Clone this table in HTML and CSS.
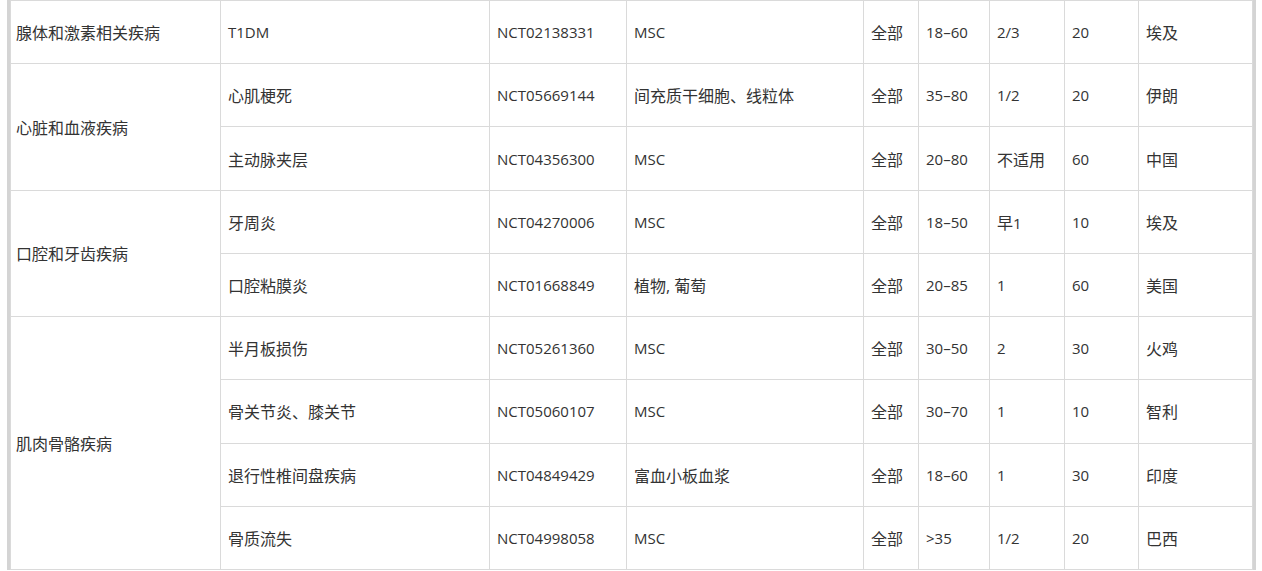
FILE: index.html
```html
<!DOCTYPE html>
<html lang="zh-CN">
<head>
<meta charset="utf-8">
<title>临床试验</title>
<link rel="stylesheet" href="styles.css">
</head>
<body>
<div class="frame">
<table class="trials">
<colgroup>
<col class="c1"><col class="c2"><col class="c3"><col class="c4"><col class="c5"><col class="c6"><col class="c7"><col class="c8"><col class="c9">
</colgroup>
<tbody>
<tr><td class="grp">腺体和激素相关疾病</td><td class="lat">T1DM</td><td class="lat">NCT02138331</td><td class="lat">MSC</td><td>全部</td><td class="lat">18–60</td><td class="lat">2/3</td><td class="lat">20</td><td>埃及</td></tr>
<tr><td class="grp" rowspan="2">心脏和血液疾病</td><td>心肌梗死</td><td class="lat">NCT05669144</td><td>间充质干细胞、线粒体</td><td>全部</td><td class="lat">35–80</td><td class="lat">1/2</td><td class="lat">20</td><td>伊朗</td></tr>
<tr><td>主动脉夹层</td><td class="lat">NCT04356300</td><td class="lat">MSC</td><td>全部</td><td class="lat">20–80</td><td>不适用</td><td class="lat">60</td><td>中国</td></tr>
<tr><td class="grp" rowspan="2">口腔和牙齿疾病</td><td>牙周炎</td><td class="lat">NCT04270006</td><td class="lat">MSC</td><td>全部</td><td class="lat">18–50</td><td>早<span class="lat">1</span></td><td class="lat">10</td><td>埃及</td></tr>
<tr><td>口腔粘膜炎</td><td class="lat">NCT01668849</td><td>植物, 葡萄</td><td>全部</td><td class="lat">20–85</td><td class="lat">1</td><td class="lat">60</td><td>美国</td></tr>
<tr><td class="grp" rowspan="4">肌肉骨骼疾病</td><td>半月板损伤</td><td class="lat">NCT05261360</td><td class="lat">MSC</td><td>全部</td><td class="lat">30–50</td><td class="lat">2</td><td class="lat">30</td><td>火鸡</td></tr>
<tr><td>骨关节炎、膝关节</td><td class="lat">NCT05060107</td><td class="lat">MSC</td><td>全部</td><td class="lat">30–70</td><td class="lat">1</td><td class="lat">10</td><td>智利</td></tr>
<tr><td>退行性椎间盘疾病</td><td class="lat">NCT04849429</td><td>富血小板血浆</td><td>全部</td><td class="lat">18–60</td><td class="lat">1</td><td class="lat">30</td><td>印度</td></tr>
<tr><td>骨质流失</td><td class="lat">NCT04998058</td><td class="lat">MSC</td><td>全部</td><td class="lat">&gt;35</td><td class="lat">1/2</td><td class="lat">20</td><td>巴西</td></tr>
</tbody>
</table>
</div>
</body>
</html>
```
FILE: styles.css
```css
html, body {
  margin: 0;
  padding: 0;
  background: #ffffff;
}
.frame {
  margin-left: 7px;
  width: 1243px;
  border-left: 3px solid #d4d4d4;
  border-right: 3px solid #d4d4d4;
}
.trials {
  width: 1243px;
  table-layout: fixed;
  border-collapse: collapse;
  font-family: "Open Sans", "Noto Sans CJK SC", sans-serif;
  font-size: 16px;
  color: #333333;
}
.trials td {
  border: 1px solid #dadada;
  height: 63.22px;
  padding: 0 0 0 7px;
  vertical-align: middle;
  box-sizing: border-box;
  white-space: nowrap;
}
.trials td.grp {
  padding-left: 5px;
}
.trials .lat {
  font-size: 15px;
}
.c1 { width: 210px; }
.c2 { width: 269px; }
.c3 { width: 137px; }
.c4 { width: 237px; }
.c5 { width: 55px; }
.c6 { width: 71px; }
.c7 { width: 75px; }
.c8 { width: 74px; }
.c9 { width: 114px; }
```
